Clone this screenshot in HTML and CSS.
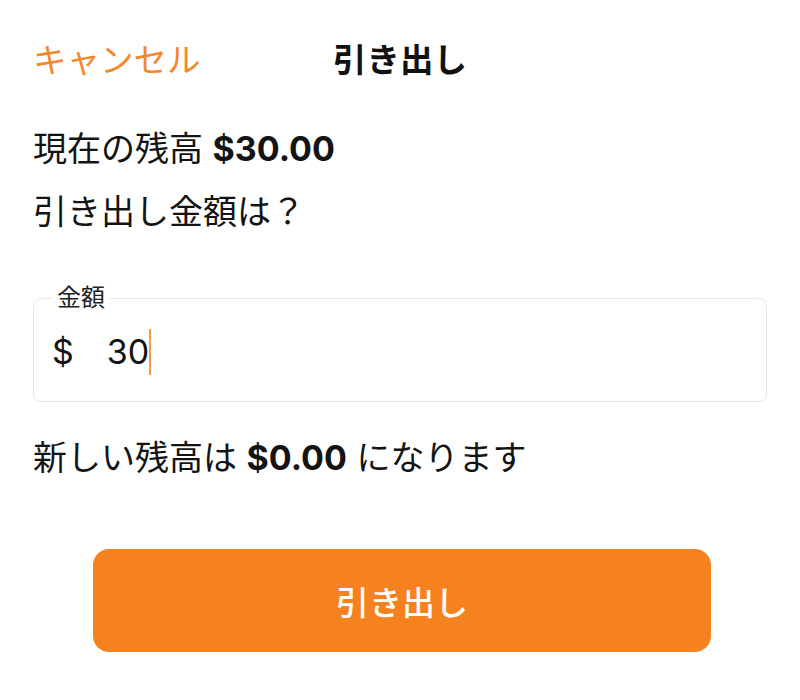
FILE: index.html
```html
<!DOCTYPE html>
<html lang="ja">
<head>
<meta charset="utf-8">
<title>引き出し</title>
<link rel="stylesheet" href="styles.css">
</head>
<body>
<div class="page">
  <header class="header">
    <span class="cancel">キャンセル</span>
    <span class="title">引き出し</span>
    <span class="spacer"></span>
  </header>
  <p class="row balance">現在の残高 <b>$30.00</b></p>
  <p class="row question">引き出し金額は？</p>
  <fieldset class="field">
    <legend class="field-label">金額</legend>
    <div class="field-input">
      <span class="currency">$</span>
      <span class="value">30</span><span class="caret"></span>
    </div>
  </fieldset>
  <p class="row result">新しい残高は <b>$0.00</b> になります</p>
  <button class="submit" type="button">引き出し</button>
</div>
</body>
</html>
```

FILE: styles.css
```css
html, body {
  margin: 0;
  padding: 0;
  background: #ffffff;
}
body {
  font-family: Inter, "Noto Sans CJK JP", sans-serif;
  color: #141414;
}
.page {
  padding: 0 33px;
}
.header {
  display: grid;
  grid-template-columns: 1fr auto 1fr;
  align-items: center;
  padding-top: 38px;
  height: 44px;
  font-size: 33.5px;
  line-height: 44px;
}
.cancel {
  color: #f2882c;
  justify-self: start;
}
.title {
  font-weight: 700;
  color: #111;
}
.row {
  margin: 0;
  font-size: 34px;
  line-height: 44px;
}
.row b {
  font-weight: 700;
}
.balance {
  margin-top: 45px;
}
.question {
  margin-top: 19px;
}
.field {
  margin: 51px 0 0 0;
  padding: 18px 18px 26px 18px;
  border: 1px solid #e8e8e8;
  border-radius: 8px;
  min-width: 0;
}
.field-label {
  padding: 0 5px;
  font-size: 24px;
  line-height: 26px;
  color: #222;
}
.field-input {
  display: flex;
  align-items: center;
  height: 46px;
  font-size: 34px;
  line-height: 46px;
}
.currency {
  margin-right: 33px;
}
.caret {
  display: inline-block;
  width: 2px;
  height: 46px;
  background: #f39a4c;
  margin-left: 0;
}
.result {
  margin-top: 34px;
}
.submit {
  display: block;
  margin: 69px 0 0 60px;
  width: 618px;
  height: 103px;
  border: none;
  border-radius: 16px;
  background: #f5821f;
  color: #ffffff;
  font-family: Inter, "Noto Sans CJK JP", sans-serif;
  font-size: 33px;
  font-weight: 500;
}
```
